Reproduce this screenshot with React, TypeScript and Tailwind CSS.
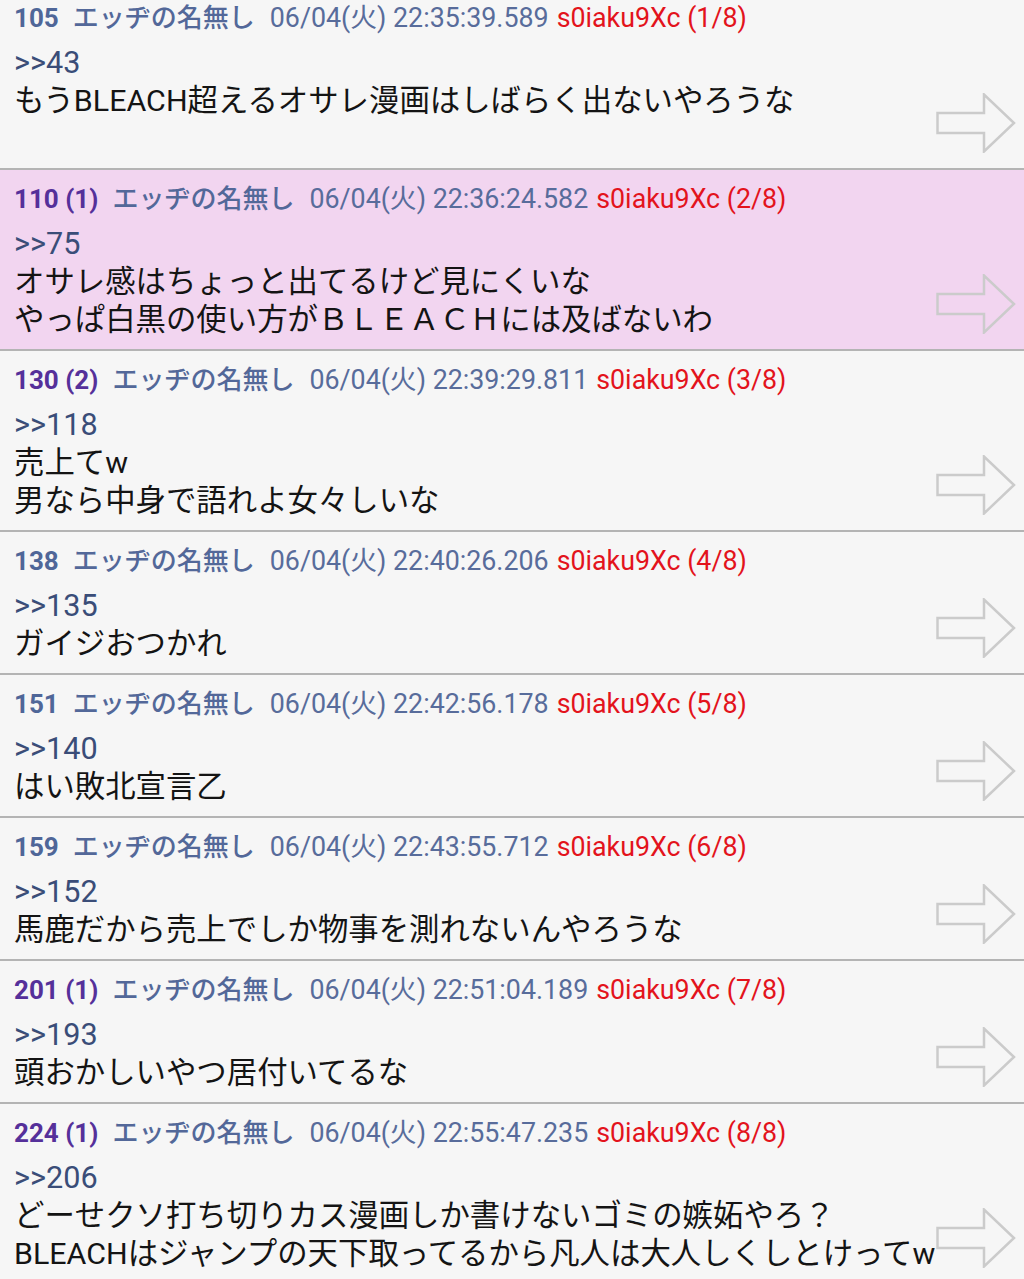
import React from "react";

interface Post {
  no: number;
  replies?: number;
  time: string;
  index: number;
  anchor: string;
  lines: string[];
  highlight?: boolean;
}

const posts: Post[] = [
  { no: 105, time: "22:35:39.589", index: 1, anchor: ">>43", lines: ["もうBLEACH超えるオサレ漫画はしばらく出ないやろうな", ""] },
  { no: 110, replies: 1, time: "22:36:24.582", index: 2, anchor: ">>75", lines: ["オサレ感はちょっと出てるけど見にくいな", "やっぱ白黒の使い方がＢＬＥＡＣＨには及ばないわ"], highlight: true },
  { no: 130, replies: 2, time: "22:39:29.811", index: 3, anchor: ">>118", lines: ["売上てw", "男なら中身で語れよ女々しいな"] },
  { no: 138, time: "22:40:26.206", index: 4, anchor: ">>135", lines: ["ガイジおつかれ"] },
  { no: 151, time: "22:42:56.178", index: 5, anchor: ">>140", lines: ["はい敗北宣言乙"] },
  { no: 159, time: "22:43:55.712", index: 6, anchor: ">>152", lines: ["馬鹿だから売上でしか物事を測れないんやろうな"] },
  { no: 201, replies: 1, time: "22:51:04.189", index: 7, anchor: ">>193", lines: ["頭おかしいやつ居付いてるな"] },
  { no: 224, replies: 1, time: "22:55:47.235", index: 8, anchor: ">>206", lines: ["どーせクソ打ち切りカス漫画しか書けないゴミの嫉妬やろ？", "BLEACHはジャンプの天下取ってるから凡人は大人しくしとけってw"] },
];

const Arrow = () => (
  <svg className="absolute right-[8px] bottom-[15px]" width="80" height="60" viewBox="0 0 80 60">
    <polygon
      points="1.5,20 48,20 48,1.5 78,30 48,58.5 48,40 1.5,40"
      fill="none"
      stroke="#cbcbcb"
      strokeWidth="2.5"
      strokeLinejoin="miter"
    />
  </svg>
);

const PostItem = ({ post, first }: { post: Post; first: boolean }) => {
  const numColor = post.replies ? "text-[#55309a]" : "text-[#4f6698]";
  return (
    <div
      className={`relative border-b-2 border-[#b4b4b4] px-[14px] pb-[10px] ${first ? "pt-0" : "pt-[11px]"} ${
        post.highlight ? "bg-[#f2d5f0]" : "bg-[#f6f6f6]"
      }`}
    >
      <Arrow />
      <div className="relative">
        <div className="text-[26px] leading-[36px] whitespace-nowrap">
          <span className={`font-bold ${numColor}`}>
            {post.no}
            {post.replies ? ` (${post.replies})` : ""}
          </span>
          <span className="ml-[14px] font-medium text-[#536899]">エッヂの名無し</span>
          <span className="ml-[15px] text-[26.8px] text-[#586c9b]">06/04(火) {post.time}</span>
          <span className="ml-[8px] text-[26.8px] text-[#e3131c]">s0iaku9Xc ({post.index}/8)</span>
        </div>
        <div className="mt-[8px] text-[30.6px] leading-[38px] text-[#3a4d78]">{post.anchor}</div>
        {post.lines.map((l, i) => (
          <div key={i} className="text-[30.4px] leading-[38px] text-[#141414] whitespace-nowrap h-[38px]">
            {l}
          </div>
        ))}
      </div>
    </div>
  );
};

export default function App() {
  return (
    <div className="w-[1024px] h-[1279px] overflow-hidden bg-[#f6f6f6] font-['Roboto','Noto_Sans_CJK_JP',sans-serif]">
      {posts.map((p, i) => (
        <PostItem key={p.no} post={p} first={i === 0} />
      ))}
    </div>
  );
}
